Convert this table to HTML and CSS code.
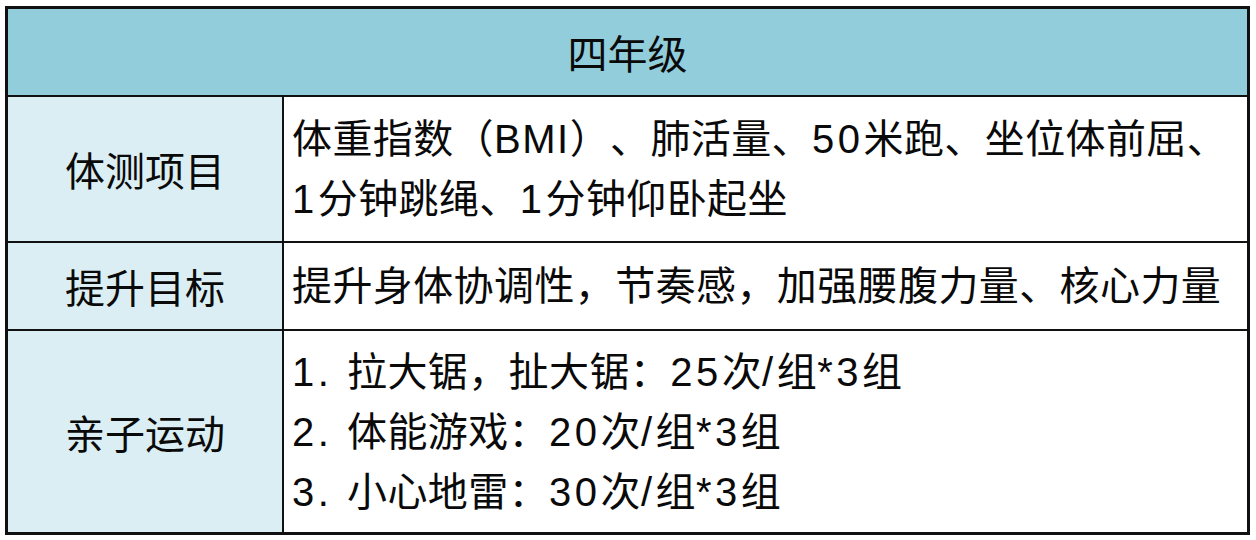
FILE: index.html
```html
<!DOCTYPE html>
<html lang="zh-CN">
<head>
<meta charset="utf-8">
<title>四年级</title>
<link rel="stylesheet" href="styles.css">
</head>
<body>
<div class="sheet">
  <div class="grade">四年级</div>

  <div class="label row-tests">体测项目</div>
  <div class="content row-tests">
    <p>体重指数（<span class="abbr">BMI</span>）、肺活量、<span class="lat">50</span>米跑、坐位体前屈、</p>
    <p><span class="lat">1</span>分钟跳绳、<span class="lat">1</span>分钟仰卧起坐</p>
  </div>

  <div class="label row-goal">提升目标</div>
  <div class="content row-goal">
    <p>提升身体协调性，节奏感，加强腰腹力量、核心力量</p>
  </div>

  <div class="label row-family">亲子运动</div>
  <div class="content row-family">
    <p><span class="lat">1. </span>拉大锯，扯大锯：<span class="lat">25</span>次<span class="lat">/</span>组<span class="lat">*3</span>组</p>
    <p><span class="lat">2. </span>体能游戏：<span class="lat">20</span>次<span class="lat">/</span>组<span class="lat">*3</span>组</p>
    <p><span class="lat">3. </span>小心地雷：<span class="lat">30</span>次<span class="lat">/</span>组<span class="lat">*3</span>组</p>
  </div>
</div>
</body>
</html>
```

FILE: styles.css
```css
html, body {
  margin: 0;
  padding: 0;
  background: #ffffff;
}

body {
  padding: 6px 0 0 5px;
  font-family: "Liberation Sans", "Noto Sans CJK SC", sans-serif;
  color: #0a0a0a;
  text-spacing-trim: space-all;
}

.sheet {
  width: 1245px;
  box-sizing: border-box;
  border: 3px solid #111111;
  background: #111111;
  display: grid;
  grid-template-columns: 274px 963px;
  grid-template-rows: 86px 144px 86px 201px;
  gap: 2px;
}

.grade {
  grid-column: 1 / 3;
  background: #92cddc;
  display: flex;
  align-items: center;
  justify-content: center;
  font-size: 40px;
}

.label {
  background: #daeef3;
  display: flex;
  align-items: center;
  justify-content: center;
  font-size: 40px;
}

.content {
  background: #ffffff;
  display: flex;
  flex-direction: column;
  justify-content: center;
  padding-left: 8px;
  font-size: 40px;
  line-height: 60px;
  letter-spacing: 0.4px;
}

.content p {
  margin: 0;
  white-space: nowrap;
}

.lat {
  letter-spacing: 3.5px;
}

.abbr {
  letter-spacing: 1.5px;
}
```
